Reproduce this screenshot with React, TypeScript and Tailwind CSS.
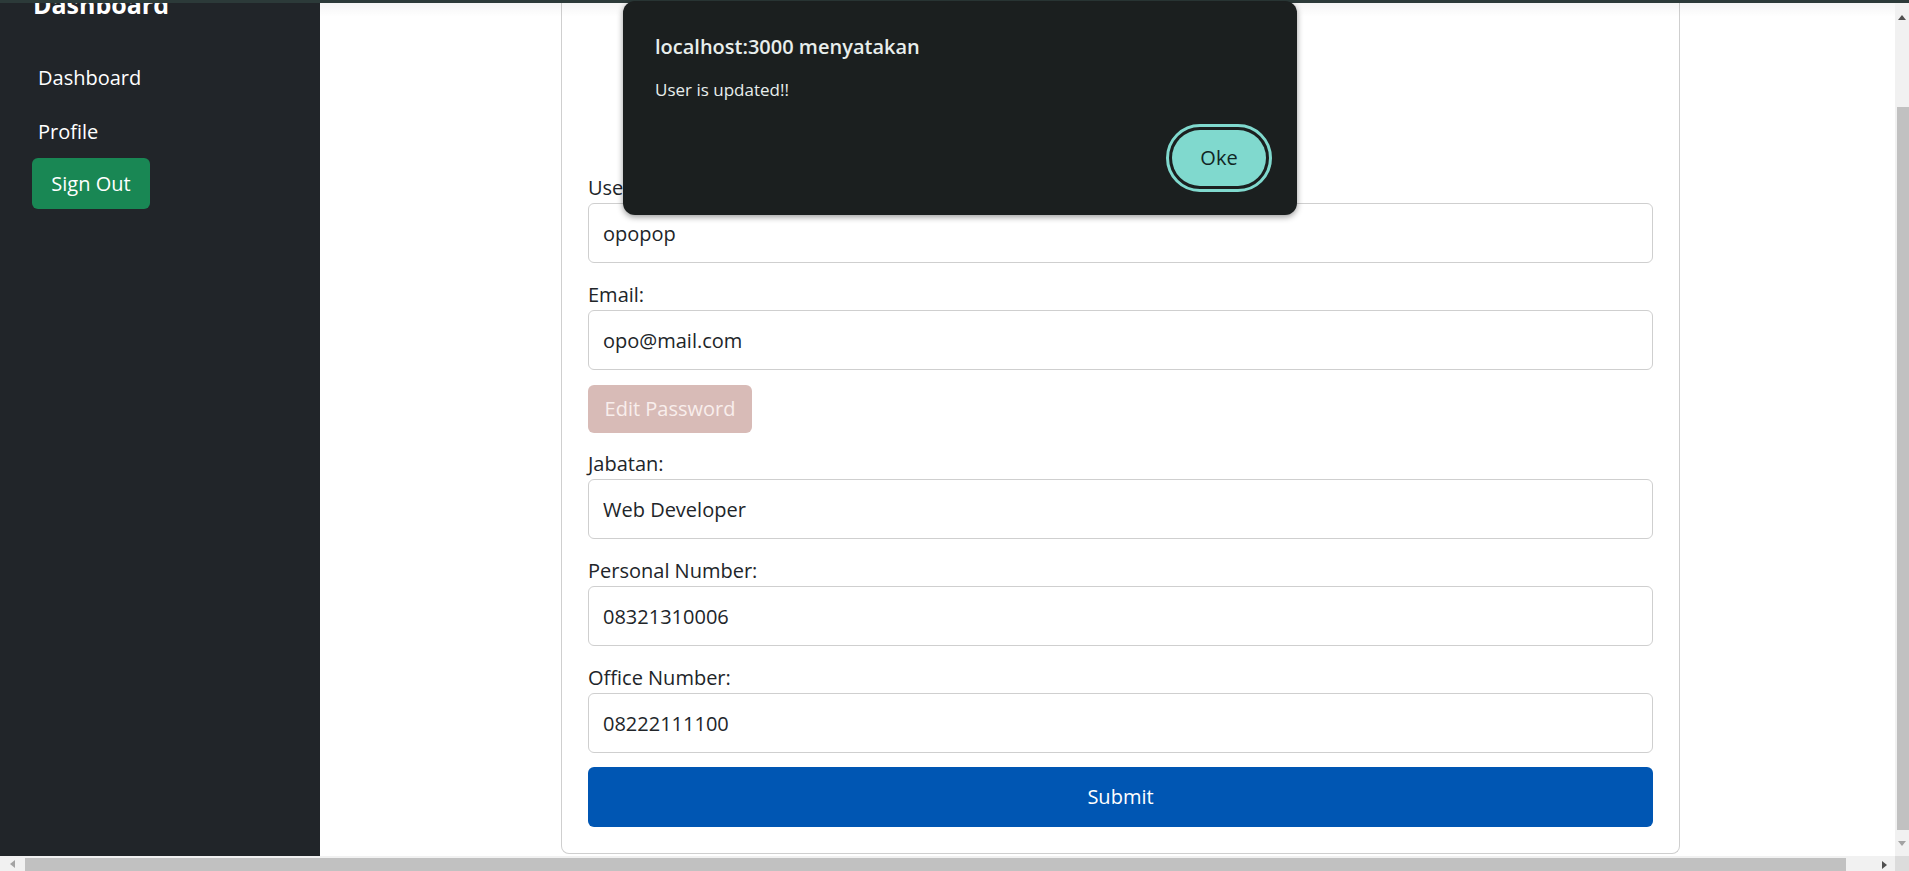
import { FC } from "react";

type FieldProps = {
  label: string;
  value: string;
  className?: string;
};

const Field: FC<FieldProps> = ({ label, value, className }) => {
  return (
    <div className={className}>
      <label className="block h-[30px] text-[20px] leading-[30px] text-[#212529]">{label}</label>
      <input
        type="text"
        defaultValue={value}
        className="block w-full h-[60px] rounded-[6px] border border-[#cfcfcf] bg-white px-[14px] text-[20px] text-[#212529] outline-none"
      />
    </div>
  );
};

export default function App() {
  return (
    <div className="relative flex h-[871px] w-[1909px] flex-col overflow-hidden bg-white font-['Open_Sans',sans-serif]">
      {/* top strip */}
      <div className="h-[3px] shrink-0 bg-[#2c3a39]" />

      <div className="flex min-h-0 flex-1">
        {/* sidebar */}
        <aside className="w-[320px] shrink-0 overflow-hidden bg-[#212529] text-white">
          <div className="-mt-[11px] ml-[33px] h-[25px] text-[25px] font-bold leading-[25px]">Dashboard</div>
          <nav className="mt-[34px]">
            <a href="#" className="flex h-[54px] items-center pl-[38px] text-[20px]">
              Dashboard
            </a>
            <a href="#" className="flex h-[54px] items-center pl-[38px] text-[20px]">
              Profile
            </a>
            <button className="-mt-[1px] ml-[32px] h-[51px] w-[118px] rounded-[6px] bg-[#198754] text-[20px] text-white">
              Sign Out
            </button>
          </nav>
        </aside>

        {/* main */}
        <main className="min-w-0 flex-1 bg-white">
          <div className="ml-[241px] w-[1119px] rounded-b-[8px] border-x border-b border-[#cfcfcf] px-[26px] pt-[170px] pb-[26px]">
            <Field label="Username:" value="opopop" />
            <Field label="Email:" value="opo@mail.com" className="mt-[17px]" />
            <button
              disabled
              className="mt-[15px] h-[48px] w-[164px] rounded-[6px] bg-[#d8bbb7] text-[20px] text-[#f8eeec]"
            >
              Edit Password
            </button>
            <Field label="Jabatan:" value="Web Developer" className="mt-[16px]" />
            <Field label="Personal Number:" value="08321310006" className="mt-[17px]" />
            <Field label="Office Number:" value="08222111100" className="mt-[17px]" />
            <button className="mt-[14px] h-[60px] w-full rounded-[6px] bg-[#0056b3] text-[20px] text-white">
              Submit
            </button>
          </div>
        </main>

        {/* vertical scrollbar */}
        <div className="flex w-[14px] shrink-0 flex-col bg-[#f1f1f1]">
          <div className="flex h-[17px] items-end justify-center">
            <svg width="8" height="5" viewBox="0 0 8 5">
              <path d="M0 5 L4 0 L8 5 Z" fill="#505050" />
            </svg>
          </div>
          <div className="h-[87px]" />
          <div className="ml-[2px] flex-1 bg-[#c1c1c1]" />
          <div className="flex h-[26px] items-center justify-center">
            <svg width="8" height="5" viewBox="0 0 8 5">
              <path d="M0 0 L4 5 L8 0 Z" fill="#a3a3a3" />
            </svg>
          </div>
        </div>
      </div>

      {/* horizontal scrollbar */}
      <div className="flex h-[15px] shrink-0">
        <div className="flex w-[25px] items-center justify-center bg-[#f1f1f1]">
          <svg width="5" height="8" viewBox="0 0 5 8">
            <path d="M5 0 L0 4 L5 8 Z" fill="#a3a3a3" />
          </svg>
        </div>
        <div className="flex flex-1 bg-[#f1f1f1] pt-[2px]">
          <div className="w-[1821px] bg-[#c1c1c1]" />
          <div className="flex flex-1 items-center justify-end pr-[8px]">
            <svg width="5" height="8" viewBox="0 0 5 8">
              <path d="M0 0 L5 4 L0 8 Z" fill="#505050" />
            </svg>
          </div>
        </div>
        <div className="w-[14px] bg-[#dcdcdc]" />
      </div>

      {/* faint shade under the top strip */}
      <div className="pointer-events-none absolute top-[3px] left-[320px] right-[14px] h-[14px] bg-linear-to-b from-black/[0.04] to-transparent" />

      {/* alert dialog */}
      <div className="absolute top-[1px] left-[623px] flex h-[214px] w-[674px] flex-col rounded-[12px] bg-[#1b1f1f] pl-[32px] pr-[31px] pt-[31px] pb-[29px] text-[#e8eeec] shadow-[0_2px_6px_rgba(0,0,0,0.4)]">
        <div className="text-[20px] font-semibold leading-[30px]">localhost:3000 menyatakan</div>
        <div className="mt-[16px] text-[17px] leading-[24px]">User is updated!!</div>
        <div className="mt-auto flex justify-end">
          <button className="h-[56px] w-[94px] rounded-full bg-[#80d9ce] text-[20px] text-[#112624] outline-[3px] outline-offset-[3px] outline-[#80d9ce]">
            Oke
          </button>
        </div>
      </div>
    </div>
  );
}
